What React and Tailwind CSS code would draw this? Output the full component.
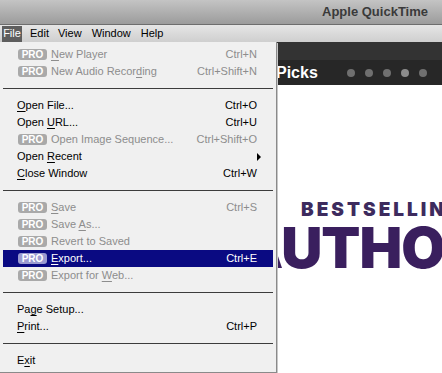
import React from 'react';

const items = [
  { pro: true, label: 'New Player', u: 0, key: 'Ctrl+N', disabled: true },
  { pro: true, label: 'New Audio Recording', u: 15, key: 'Ctrl+Shift+N', disabled: true },
  { sep: true },
  { label: 'Open File...', u: 0, key: 'Ctrl+O' },
  { label: 'Open URL...', u: 5, key: 'Ctrl+U' },
  { pro: true, label: 'Open Image Sequence...', u: -1, key: 'Ctrl+Shift+O', disabled: true },
  { label: 'Open Recent', u: 5, sub: true },
  { label: 'Close Window', u: 0, key: 'Ctrl+W' },
  { sep: true },
  { pro: true, label: 'Save', u: 0, key: 'Ctrl+S', disabled: true },
  { pro: true, label: 'Save As...', u: 5, disabled: true },
  { pro: true, label: 'Revert to Saved', u: -1, disabled: true },
  { pro: true, label: 'Export...', u: 0, key: 'Ctrl+E', active: true },
  { pro: true, label: 'Export for Web...', u: 11, disabled: true },
  { sep: true },
  { label: 'Page Setup...', u: 2 },
  { label: 'Print...', u: 0, key: 'Ctrl+P' },
  { sep: true },
  { label: 'Exit', u: 1 },
];

const Label = ({ text, u }) => {
  if (u < 0) return <span>{text}</span>;
  return (
    <span>
      {text.slice(0, u)}
      <span className="underline underline-offset-2">{text[u]}</span>
      {text.slice(u + 1)}
    </span>
  );
};

const Pro = ({ active }) => (
  <span
    className={`mr-[4px] flex h-[11px] w-[29px] items-center justify-center rounded-[3px] text-[10px] font-bold leading-none text-white ${
      active ? 'bg-[#9a9ad0]' : 'bg-[#a9a9a9]'
    }`}
  >
    PRO
  </span>
);

const FileMenu = () => (
  <div className="absolute left-0 top-[42px] z-10 h-[331px] w-[277px] border-r border-b border-[#8a8a8a] bg-[#f0f0f0] px-[3px] pt-[4px] text-[11px] shadow-[1px_1px_0_#c8c8c8]">
    {items.map((it, i) =>
      it.sep ? (
        <div key={i} className="flex h-[17px] items-center">
          <div className="h-px w-full bg-[#3c3c3c]" />
        </div>
      ) : (
        <div
          key={i}
          className={`flex h-[17px] items-center pr-[16px] ${it.pro ? 'pl-[15px]' : 'pl-[14px]'} ${
            it.active ? 'bg-[#0a0a82] text-white' : it.disabled ? 'text-[#8d8d8d]' : 'text-black'
          }`}
        >
          {it.pro && <Pro active={it.active} />}
          <span className="flex-1">
            <Label text={it.label} u={it.u} />
          </span>
          {it.key && <span>{it.key}</span>}
          {it.sub && (
            <svg width="5" height="8" viewBox="0 0 5 8" className="mr-[-5px]">
              <path d="M0 0 L4 4 L0 8 Z" fill="#000" />
            </svg>
          )}
        </div>
      )
    )}
  </div>
);

export default function App() {
  return (
    <div
      className="relative h-[373px] w-[442px] overflow-hidden bg-white"
      style={{ fontFamily: '"Liberation Sans", Arial, sans-serif' }}
    >
      {/* title bar */}
      <div className="flex h-[25px] items-center justify-end border-b border-[#6e6e6e] bg-gradient-to-b from-[#c4c4c4] to-[#9c9c9c] pr-[14px]">
        <span className="text-[13px] font-bold text-[#3a3a3a]">Apple QuickTime</span>
      </div>

      {/* menu bar */}
      <div className="flex h-[17px] items-center bg-gradient-to-b from-[#e6e6e6] via-[#dadada] to-[#cfcfcf] pl-[2px] text-[11px] text-black">
        <span className="flex h-[16px] w-[20px] items-center justify-center bg-[#5e5e5e] text-white">File</span>
        <span className="ml-[8px]">Edit</span>
        <span className="ml-[9px]">View</span>
        <span className="ml-[10px]">Window</span>
        <span className="ml-[10px]">Help</span>
      </div>

      {/* player chrome */}
      <div className="h-[18px] bg-[#333333]" />
      <div className="flex h-[25px] items-center bg-[#272727] pl-[276px]">
        <span className="text-[16px] font-bold text-white">Picks</span>
        <div className="ml-[29px] flex items-center gap-[10px]">
          <span className="h-[8px] w-[8px] rounded-full bg-[#6f6f6f]" />
          <span className="h-[8px] w-[8px] rounded-full bg-[#6f6f6f]" />
          <span className="h-[8px] w-[8px] rounded-full bg-[#6f6f6f]" />
          <span className="h-[8px] w-[8px] rounded-full bg-[#8c8c8c]" />
          <span className="h-[8px] w-[8px] rounded-full bg-[#6f6f6f]" />
        </div>
      </div>

      {/* page content */}
      <div className="whitespace-nowrap pt-[115px]" style={{ fontFamily: 'Inter, "Liberation Sans", sans-serif' }}>
        <div className="pl-[301px] text-[19px] font-black leading-[20px] tracking-[3px] text-[#3d2b5e]">BESTSELLING</div>
        <div className="mt-[2px] pl-[238px] text-[57px] font-black leading-[52px] tracking-[-1px] text-[#3a1f5e]">AUTHOR</div>
      </div>

      <FileMenu />
    </div>
  );
}
